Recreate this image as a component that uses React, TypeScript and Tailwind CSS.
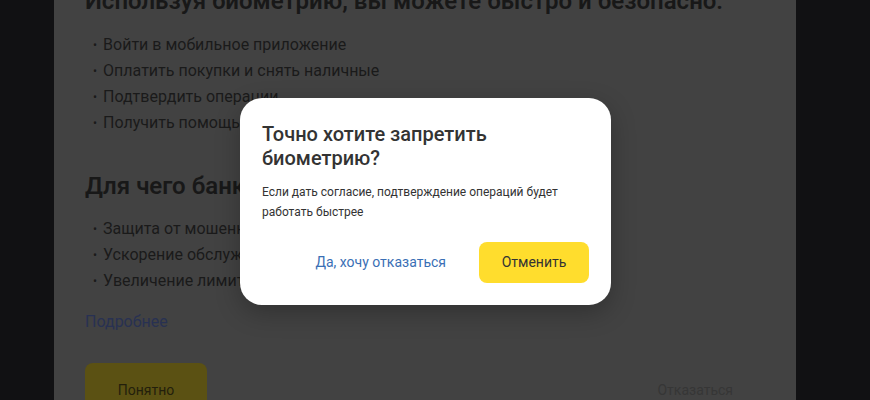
const items1 = [
  'Войти в мобильное приложение',
  'Оплатить покупки и снять наличные',
  'Подтвердить операции',
  'Получить помощь в чате',
]

const items2 = [
  'Защита от мошенников',
  'Ускорение обслуживания',
  'Увеличение лимитов',
]

const Bullets = ({ list }: { list: string[] }) => (
  <ul className="ml-[8px] flex flex-col">
    {list.map((item) => (
      <li key={item} className="flex items-center gap-[6px] text-[16px] leading-[26px] text-[#1a1a1a]">
        <span className="text-[12px]">•</span>
        <span>{item}</span>
      </li>
    ))}
  </ul>
)

export default function App() {
  return (
    <div className="relative flex h-[400px] w-[870px] overflow-hidden bg-[#111113] font-['Roboto',sans-serif]">
      <div className="w-[54px] shrink-0" />

      {/* Страница под затемнением */}
      <div className="flex w-[742px] shrink-0 flex-col bg-[#424242] pl-[31px] pr-[63px]">
        <h2 className="mt-[-15px] whitespace-nowrap text-[24px] font-semibold leading-[32px] text-[#181818]">
          Используя биометрию, вы можете быстро и безопасно:
        </h2>
        <div className="mt-[15px]">
          <Bullets list={items1} />
        </div>
        <h2 className="mt-[34px] text-[24px] font-semibold leading-[32px] text-[#181818]">
          Для чего банку биометрия
        </h2>
        <div className="mt-[14px]">
          <Bullets list={items2} />
        </div>
        <a className="mt-[16px] text-[16px] leading-[24px] text-[#283152]">Подробнее</a>
        <div className="mt-[29px] flex items-center justify-between">
          <button className="h-[54px] w-[122px] rounded-[8px] bg-[#5b5113] text-[14px] text-[#231f0c]">
            Понятно
          </button>
          <button className="text-[14px] text-[#363636]">Отказаться</button>
        </div>
      </div>

      {/* Модальное окно */}
      <div className="absolute left-[240px] top-[98px] flex h-[207px] w-[371px] flex-col rounded-[22px] bg-white px-[22px] pb-[22px] pt-[24px] shadow-[0_8px_24px_rgba(0,0,0,0.25)]">
        <h3 className="text-[20px] font-medium leading-[24px] text-[#333333]">
          Точно хотите запретить биометрию?
        </h3>
        <p className="mt-[12px] text-[12px] leading-[20px] text-[#333333]">
          Если дать согласие, подтверждение операций будет работать быстрее
        </p>
        <div className="mt-auto flex items-center justify-end gap-[33px]">
          <button className="text-[14px] text-[#3a6fb5]">Да, хочу отказаться</button>
          <button className="h-[41px] w-[110px] rounded-[8px] bg-[#ffdd2d] text-[14px] text-[#333333]">
            Отменить
          </button>
        </div>
      </div>
    </div>
  )
}
